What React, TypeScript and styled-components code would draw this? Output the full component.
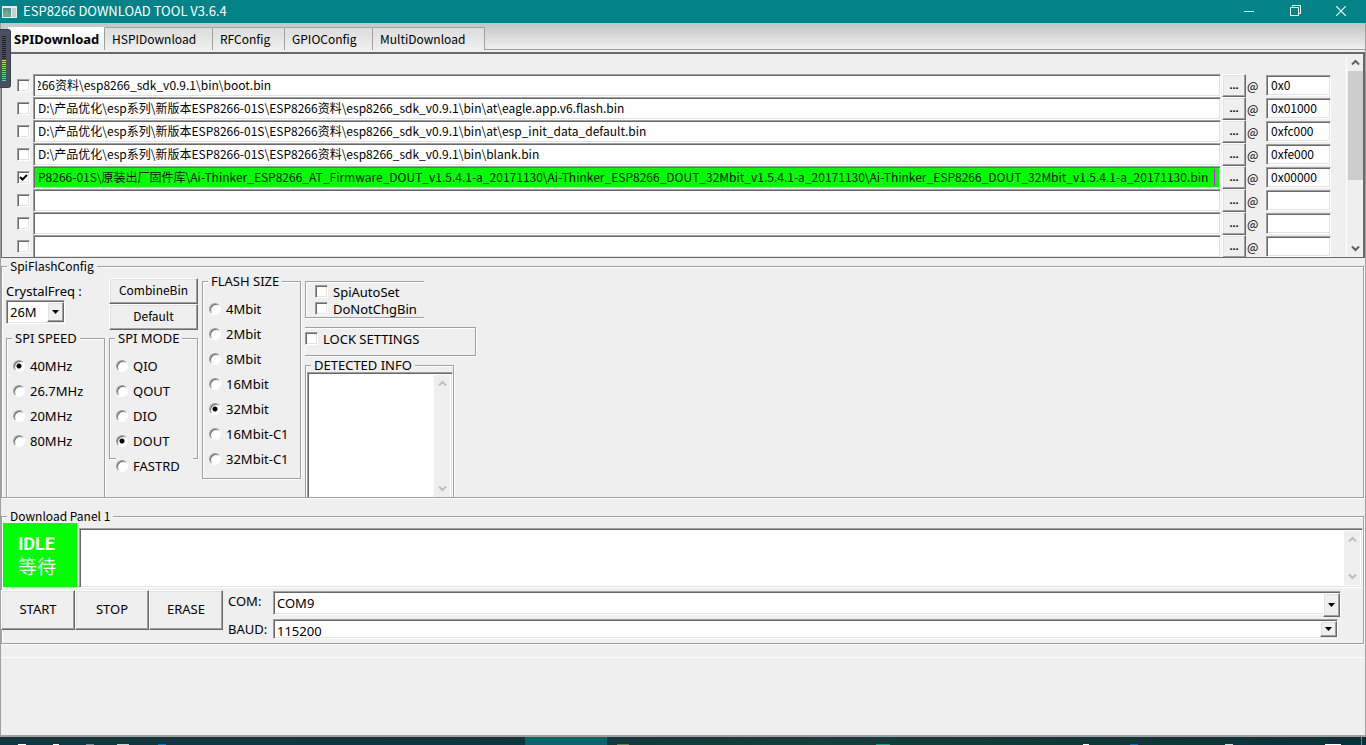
import React, { useState } from "react";
import styled, { createGlobalStyle, css } from "styled-components";

const face = "#efefef";
const mid = "#a0a0a0";
const dark = "#696969";
const light = "#e3e3e3";

const GlobalStyle = createGlobalStyle`
  * { box-sizing: border-box; }
  body {
    margin: 0;
    background: ${face};
    color: #000;
    font: 13px/16px "Noto Sans", "Noto Sans CJK SC", sans-serif;
  }
  button, input, select, textarea { font: inherit; color: inherit; margin: 0; border-radius: 0; outline: none; }
`;

const compact = css`
  font-family: "Noto Sans CJK SC", sans-serif;
  font-size: 12px;
`;

const sunken = css`
  border: 1px solid;
  border-color: ${mid} #fff #fff ${mid};
  box-shadow: inset 1px 1px 0 ${dark}, inset -1px -1px 0 ${light};
  background: #fff;
`;

const raised = css`
  border: 1px solid;
  border-color: #fff ${dark} ${dark} #fff;
  box-shadow: inset -1px -1px 0 ${mid}, inset 1px 1px 0 ${light};
  background: ${face};
`;

const Window = styled.div`
  position: relative;
  min-height: 100vh;
  display: flex;
  flex-direction: column;
  overflow: hidden;
`;

const TitleBar = styled.header`
  display: flex;
  align-items: center;
  gap: 6px;
  height: 23px;
  padding-left: 2px;
  background: #038387;
  color: #fff;
`;

const Title = styled.h1`
  flex: 1;
  margin: 0;
  padding-bottom: 2px;
  font-family: "Noto Sans CJK SC", sans-serif;
  font-size: 13px;
  font-weight: 400;
`;

const CaptionButton = styled.button`
  width: 46px;
  height: 23px;
  padding: 0 0 2px;
  border: 0;
  background: none;
  display: flex;
  align-items: center;
  justify-content: center;
`;

const CaptionButtons = styled.div`
  display: flex;
  margin-right: 2px;
`;

const Frame = styled.div`
  flex: 1;
  display: flex;
  flex-direction: column;
  border: 1px solid ${mid};
  border-width: 0 1px 2px;
`;

const TabBar = styled.nav`
  display: flex;
  align-items: flex-start;
  height: 27px;
  padding: 4px 0 0 7px;
  background: linear-gradient(#c3c3c3, #f0f0f0);
  border-bottom: 1px solid ${mid};
`;

const Tab = styled.button<{ $active?: boolean; $width: number }>`
  width: ${(p) => p.$width}px;
  height: 23px;
  padding: 0 0 1px ${(p) => (p.$active ? 6 : 7)}px;
  text-align: left;
  white-space: nowrap;
  border: 1px solid ${mid};
  border-width: 1px 1px 0 0;
  border-radius: 0 2px 0 0;
  background: ${(p) => (p.$active ? "linear-gradient(#fff, #f0f0f0)" : "linear-gradient(#dcdcdc, #f0f0f0)")};
  border-color: ${(p) => (p.$active ? `#fff ${mid}` : mid)};
  ${(p) => (p.$active ? "font-weight: 700;" : compact)}
`;

const FilePanel = styled.section`
  display: flex;
  height: 206px;
  margin-top: 2px;
  overflow: hidden;
  border: 1px solid ${dark};
  border-width: 2px 2px 1px 1px;
`;

const FileList = styled.div`
  flex: 1;
  min-width: 0;
  padding-top: 20px;
`;

const FileRow = styled.div`
  display: flex;
  height: 23px;
  padding: 0 15px;
  align-items: flex-start;
  ${compact}
`;

const Check = styled.input.attrs({ type: "checkbox" })`
  appearance: none;
  flex: none;
  width: 13px;
  height: 13px;
  ${sunken}
  &:checked {
    background: #fff url("data:image/svg+xml,%3Csvg xmlns='http://www.w3.org/2000/svg' width='11' height='11'%3E%3Cpath d='M2 5l2.5 2.5L9 3' fill='none' stroke='%23000' stroke-width='2'/%3E%3C/svg%3E") no-repeat center;
  }
`;

const RowCheck = styled(Check)`
  margin: 5px 3px 0 0;
`;

const PathBox = styled.div`
  position: relative;
  flex: 1;
  min-width: 0;
`;

const PathInput = styled.input<{ $found?: boolean; $scrolled?: boolean }>`
  display: block;
  width: 100%;
  height: 23px;
  padding: 0 4px 2px;
  ${sunken}
  ${(p) => p.$found && "background: #00ff00;"}
  ${(p) => p.$scrolled && "text-indent: -3px;"}
`;

const Caret = styled.span`
  position: absolute;
  right: 6px;
  top: 3px;
  width: 1px;
  height: 17px;
  background: #f0f;
`;

const Browse = styled.button`
  width: 24px;
  height: 23px;
  padding: 0 0 1px;
  margin-left: 1px;
  ${raised}
  && { font: 700 11px/16px "Liberation Sans", sans-serif; }
`;

const At = styled.span`
  width: 20px;
  padding: 4px 0 0 1px;
`;

const AddressInput = styled.input`
  width: 65px;
  height: 21px;
  margin-top: 1px;
  padding: 0 4px 2px;
  ${sunken}
`;

const Bar = styled.div`
  flex: none;
  width: 17px;
  display: flex;
  flex-direction: column;
  align-items: center;
  background: ${face};
  border-left: 1px solid #fff;
`;

const BarArrow = styled.button`
  width: 16px;
  height: 17px;
  padding: 0;
  border: 0;
  background: none;
  display: flex;
  align-items: center;
  justify-content: center;
`;

const Thumb = styled.div`
  width: 15px;
  height: 109px;
  background: #cdcdcd;
`;

const Grow = styled.div`
  flex: 1;
`;

const Group = styled.fieldset`
  margin: 0;
  padding: 0;
  min-width: 0;
  border: 1px solid ${mid};
  box-shadow: 1px 1px 0 #fff, inset 1px 1px 0 #fff;
`;

const Legend = styled.legend<{ $compact?: boolean }>`
  margin-left: 5px;
  padding: 0 3px;
  height: 16px;
  line-height: 16px;
  background: ${face};
  white-space: nowrap;
  ${(p) => p.$compact && compact}
`;

const FlashGroup = styled(Group)`
  height: 240px;
  overflow: hidden;
  margin: 0 1px 0 0;
`;

const FlashColumns = styled.div`
  display: flex;
  gap: 4px;
  padding-left: 4px;
  margin-top: -1px;
`;

const Column = styled.div<{ $width: number }>`
  width: ${(p) => p.$width}px;
  display: flex;
  flex-direction: column;
`;

const FreqField = styled.label`
  display: block;
  padding-top: 10px;
  height: 57px;
`;

const Combo = styled.span<{ $height: number; $width?: string; $low?: boolean }>`
  position: relative;
  display: block;
  width: ${(p) => p.$width || "100%"};
  select {
    appearance: none;
    display: block;
    width: 100%;
    height: ${(p) => p.$height}px;
    padding: ${(p) => (p.$low ? "3px 20px 0 3px" : "0 20px 1px 3px")};
    ${sunken}
  }
  span {
    position: absolute;
    top: 2px;
    right: 1px;
    bottom: 2px;
    width: 17px;
    display: flex;
    align-items: center;
    justify-content: center;
    pointer-events: none;
    ${raised}
  }
`;

const FreqCombo = styled(Combo)`
  margin-top: 1px;
`;

const PushButton = styled.button<{ $height: number; $compact?: boolean }>`
  flex: 1 1 0;
  min-height: ${(p) => p.$height}px;
  padding: 0 0 2px;
  ${raised}
  ${(p) => p.$compact && compact}
`;

const ButtonStack = styled.div`
  display: flex;
  flex-direction: column;
  height: 52px;
  margin-top: 5px;
`;

const OptionList = styled.div<{ $top: number }>`
  display: flex;
  flex-direction: column;
  padding: ${(p) => p.$top}px 0 0 6px;
`;

const Option = styled.label`
  display: flex;
  align-items: center;
  gap: 5px;
  height: 25px;
  white-space: nowrap;
`;

const ModeList = styled(OptionList)`
  margin: 0 4px 0 6px;
  padding-left: 0;
  label:last-child { background: ${face}; }
`;

const Radio = styled.input.attrs({ type: "radio" })`
  appearance: none;
  flex: none;
  width: 12px;
  height: 12px;
  && { border-radius: 50%; }
  border: 1px solid;
  border-color: ${mid} #fff #fff ${mid};
  background: #fff;
  box-shadow: inset 1px 1px 0 ${dark};
  &:checked { background: radial-gradient(circle, #000 2px, #fff 3px); }
`;

const SpeedGroup = styled(Group)`
  height: 180px;
`;

const ModeGroup = styled(Group)`
  height: 129px;
`;

const SizeGroup = styled(Group)`
  height: 206px;
`;

const AutoGroup = styled.div`
  width: 119px;
  height: 37px;
  margin-top: 8px;
  padding: 1px 0 0 9px;
  border: 1px solid ${mid};
  border-right: 0;
  box-shadow: 0 1px 0 #fff, inset 1px 1px 0 #fff;
`;

const CheckLabel = styled.label`
  display: flex;
  align-items: center;
  gap: 5px;
  height: 17px;
`;

const LockGroup = styled.div`
  height: 29px;
  margin: 9px 0 1px;
  padding-top: 2px;
  border: 1px solid ${mid};
  border-left-width: 0;
  box-shadow: 1px 1px 0 #fff, inset 1px 1px 0 #fff, inset 1px 0 0 ${mid};
`;

const DetectedGroup = styled(Group)`
  width: 149px;
  height: 150px;
`;

const TextPane = styled.div<{ $height: number }>`
  flex: 1;
  display: flex;
  height: ${(p) => p.$height}px;
  padding: 2px;
  ${sunken}
  textarea {
    flex: 1;
    min-width: 0;
    padding: 0;
    border: 0;
    resize: none;
    background: #fff;
  }
`;

const DetectedPane = styled(TextPane)`
  margin: -1px 0 0 1px;
`;

const DownloadGroup = styled(Group)`
  margin: 10px 1px 0 0;
`;

const StatusRow = styled.div`
  display: flex;
  gap: 2px;
  margin: -1px 0 0 1px;
`;

const Status = styled.div`
  width: 74px;
  height: 64px;
  padding: 10px 0 0 15px;
  background: #00ff00;
  color: #fff;
  font: 19px/22px "Noto Sans CJK SC", sans-serif;
  strong { display: block; font-family: Roboto, sans-serif; font-size: 18px; }
`;

const LogPane = styled(TextPane)`
  margin-top: 5px;
`;

const ControlRow = styled.div`
  display: flex;
  height: 53px;
  margin-top: 2px;
  margin-left: -1px;
`;

const Actions = styled.div`
  display: flex;
  width: 222px;
  height: 40px;
`;

const Fields = styled.div`
  flex: 1;
  padding: 1px 22px 0 5px;
`;

const Field = styled.label<{ $height: number }>`
  display: flex;
  height: ${(p) => p.$height}px;
  > b { flex: none; width: 45px; padding-top: 2px; font-weight: 400; }
`;

const Footer = styled.div`
  height: 14px;
  margin: 0 1px;
  border-bottom: 1px solid #fff;
`;

const Taskbar = styled.footer`
  position: relative;
  display: flex;
  align-items: flex-end;
  height: 8px;
  background: linear-gradient(90deg, #12363c, #10363c 35%, #163c3c 60%, #0b3036);
`;

const TaskTile = styled.span<{ $left: string; $width: number; $color: string; $full?: boolean }>`
  position: absolute;
  left: ${(p) => p.$left};
  bottom: 0;
  width: ${(p) => p.$width}px;
  height: ${(p) => (p.$full ? 8 : 1)}px;
  background: ${(p) => p.$color};
`;

const Gadget = styled.aside`
  position: absolute;
  left: 0;
  top: 29px;
  width: 11px;
  height: 59px;
  border-radius: 0 3px 3px 0;
  border: 1px solid #3a3f4c;
  border-left: 0;
  background: #4b4f5f;
  padding: 6px 4px 5px 2px;
`;

const Meter = styled.div`
  height: 46px;
  background:
    repeating-linear-gradient(transparent 0 1px, #4b4f5f 1px 2px),
    linear-gradient(#1d2027 52%, #d6e04a 52%, #7ad36b 75%, #3cd8c8);
`;

const ArrowIcon = ({ down, faint }: { down?: boolean; faint?: boolean }) => (
  <svg width="9" height="7" viewBox="0 0 9 7" aria-hidden="true">
    <path d={down ? "M1 1.5L4.500 5L8 1.500" : "M1 5.500L4.500 2L8 5.500"} fill="none" stroke={faint ? "#bfbfbf" : "#606060"} strokeWidth="2" />
  </svg>
);

const Triangle = () => (
  <span aria-hidden="true">
    <svg width="7" height="4" viewBox="0 0 7 4"><path d="M0 0H7L3.500 4Z" fill="#000" /></svg>
  </span>
);

const ScrollArrows = ({ faint, thumb }: { faint?: boolean; thumb?: boolean }) => (
  <Bar>
    <BarArrow aria-label="Scroll up"><ArrowIcon faint={faint} /></BarArrow>
    {thumb && <Thumb />}
    <Grow />
    <BarArrow aria-label="Scroll down"><ArrowIcon down faint={faint} /></BarArrow>
  </Bar>
);

const sdk = "D:\\产品优化\\esp系列\\新版本ESP8266-01S\\ESP8266资料\\esp8266_sdk_v0.9.1\\bin\\";
const files = [
  { path: "266资料\\esp8266_sdk_v0.9.1\\bin\\boot.bin", addr: "0x0", scrolled: true },
  { path: sdk + "at\\eagle.app.v6.flash.bin", addr: "0x01000" },
  { path: sdk + "at\\esp_init_data_default.bin", addr: "0xfc000" },
  { path: sdk + "blank.bin", addr: "0xfe000" },
  {
    path: "P8266-01S\\原装出厂固件库\\Ai-Thinker_ESP8266_AT_Firmware_DOUT_v1.5.4.1-a_20171130\\Ai-Thinker_ESP8266_DOUT_32Mbit_v1.5.4.1-a_20171130\\Ai-Thinker_ESP8266_DOUT_32Mbit_v1.5.4.1-a_20171130.bin",
    addr: "0x00000",
    found: true,
  },
  { path: "", addr: "" },
  { path: "", addr: "" },
  { path: "", addr: "" },
];

const tabs: [string, number][] = [
  ["SPIDownload", 97],
  ["HSPIDownload", 108],
  ["RFConfig", 72],
  ["GPIOConfig", 88],
  ["MultiDownload", 112],
];

const Radios = ({ name, items, initial }: { name: string; items: string[]; initial: string }) => {
  const [value, setValue] = useState(initial);
  return (
    <>
      {items.map((item) => (
        <Option key={item}>
          <Radio name={name} checked={value === item} onChange={() => setValue(item)} />
          {item}
        </Option>
      ))}
    </>
  );
};

export default function App() {
  return (
    <Window>
      <GlobalStyle />
      <TitleBar>
        <svg width="15" height="12" viewBox="0 0 15 12" aria-hidden="true">
          <rect width="15" height="12" fill="#e8ecec" />
          <rect x="1" y="2" width="8" height="9" fill="#5b8f9c" />
          <path d="M1 11V7l4-3 4 4v3z" fill="#6fae84" />
          <rect x="10" y="2" width="4" height="9" fill="#c9cfd0" />
        </svg>
        <Title>ESP8266 DOWNLOAD TOOL V3.6.4</Title>
        <CaptionButtons>
          <CaptionButton aria-label="Minimize">
            <svg width="10" height="10"><path d="M0 5.500H10" stroke="#fff" /></svg>
          </CaptionButton>
          <CaptionButton aria-label="Restore">
            <svg width="11" height="11" fill="none" stroke="#fff"><path d="M.5 2.500H8.500V10.500H.5ZM2.500 2.500V.5H10.500V8.500H8.500" /></svg>
          </CaptionButton>
          <CaptionButton aria-label="Close">
            <svg width="10" height="10"><path d="M0 0L10 10M10 0L0 10" stroke="#fff" strokeWidth="1.200" /></svg>
          </CaptionButton>
        </CaptionButtons>
      </TitleBar>

      <Frame>
        <TabBar>
          {tabs.map(([label, width], i) => (
            <Tab key={label} $width={width} $active={i === 0}>{label}</Tab>
          ))}
        </TabBar>

        <FilePanel>
          <FileList>
            {files.map((f, i) => (
              <FileRow key={i}>
                <RowCheck defaultChecked={f.found} aria-label={`Use file ${i + 1}`} />
                <PathBox>
                  <PathInput defaultValue={f.path} $found={f.found} $scrolled={f.scrolled} aria-label={`File ${i + 1}`} />
                  {f.found && <Caret />}
                </PathBox>
                <Browse>...</Browse>
                <At>@</At>
                <AddressInput defaultValue={f.addr} aria-label={`Address ${i + 1}`} />
              </FileRow>
            ))}
          </FileList>
          <ScrollArrows thumb />
        </FilePanel>

        <FlashGroup>
          <Legend $compact>SpiFlashConfig</Legend>
          <FlashColumns>
            <Column $width={99}>
              <FreqField>
                CrystalFreq :
                <FreqCombo $height={24} $width="59px">
                  <select defaultValue="26M"><option>26M</option></select>
                  <Triangle />
                </FreqCombo>
              </FreqField>
              <SpeedGroup>
                <Legend>SPI SPEED</Legend>
                <OptionList $top={7}>
                  <Radios name="speed" items={["40MHz", "26.7MHz", "20MHz", "80MHz"]} initial="40MHz" />
                </OptionList>
              </SpeedGroup>
            </Column>
            <Column $width={89}>
              <ButtonStack>
                <PushButton $height={26} $compact>CombineBin</PushButton>
                <PushButton $height={26} $compact>Default</PushButton>
              </ButtonStack>
              <ModeGroup>
                <Legend>SPI MODE</Legend>
                <ModeList $top={7}>
                  <Radios name="mode" items={["QIO", "QOUT", "DIO", "DOUT", "FASTRD"]} initial="DOUT" />
                </ModeList>
              </ModeGroup>
            </Column>
            <Column $width={99}>
              <SizeGroup>
                <Legend>FLASH SIZE</Legend>
                <OptionList $top={7}>
                  <Radios name="size" items={["4Mbit", "2Mbit", "8Mbit", "16Mbit", "32Mbit", "16Mbit-C1", "32Mbit-C1"]} initial="32Mbit" />
                </OptionList>
              </SizeGroup>
            </Column>
            <Column $width={171}>
              <AutoGroup>
                <CheckLabel><Check />SpiAutoSet</CheckLabel>
                <CheckLabel><Check />DoNotChgBin</CheckLabel>
              </AutoGroup>
              <LockGroup>
                <CheckLabel><Check />LOCK SETTINGS</CheckLabel>
              </LockGroup>
              <DetectedGroup>
                <Legend>DETECTED INFO</Legend>
                <DetectedPane $height={128}>
                  <textarea aria-label="Detected info" />
                  <ScrollArrows faint />
                </DetectedPane>
              </DetectedGroup>
            </Column>
          </FlashColumns>
        </FlashGroup>

        <DownloadGroup>
          <Legend $compact>Download Panel 1</Legend>
          <StatusRow>
            <Status><strong>IDLE</strong>等待</Status>
            <LogPane $height={60}>
              <textarea aria-label="Log" />
              <ScrollArrows faint />
            </LogPane>
          </StatusRow>
          <ControlRow>
            <Actions>
              <PushButton $height={40}>START</PushButton>
              <PushButton $height={40}>STOP</PushButton>
              <PushButton $height={40}>ERASE</PushButton>
            </Actions>
            <Fields>
              <Field $height={28}>
                <b>COM:</b>
                <Combo $height={24}>
                  <select defaultValue="COM9"><option>COM9</option></select>
                  <Triangle />
                </Combo>
              </Field>
              <Field $height={20}>
                <b>BAUD:</b>
                <Combo $height={20} $width="calc(100% - 48px)" $low>
                  <select defaultValue="115200"><option>115200</option></select>
                  <Triangle />
                </Combo>
              </Field>
            </Fields>
          </ControlRow>
        </DownloadGroup>
        <Footer />
      </Frame>

      <Taskbar>
        <TaskTile $left="38.4%" $width={82} $color="#0b6468" $full />
        <TaskTile $left="1.3%" $width={8} $color="#fff" />
        <TaskTile $left="3.9%" $width={6} $color="#fff" />
        <TaskTile $left="6.3%" $width={8} $color="#7d8f92" />
        <TaskTile $left="8.6%" $width={12} $color="#c7d3d3" />
        <TaskTile $left="11.600%" $width={8} $color="#0b78d0" />
        <TaskTile $left="45.2%" $width={12} $color="#6f7a4a" />
        <TaskTile $left="64.1%" $width={14} $color="#14a07a" />
        <TaskTile $left="79.3%" $width={6} $color="#fff" />
        <TaskTile $left="82.7%" $width={8} $color="#1464d2" />
        <TaskTile $left="89.7%" $width={8} $color="#d6dcdc" />
        <TaskTile $left="97%" $width={16} $color="#fff" />
        <TaskTile $left="99.6%" $width={1} $color="#6d8487" $full />
      </Taskbar>

      <Gadget aria-hidden="true"><Meter /></Gadget>
    </Window>
  );
}
